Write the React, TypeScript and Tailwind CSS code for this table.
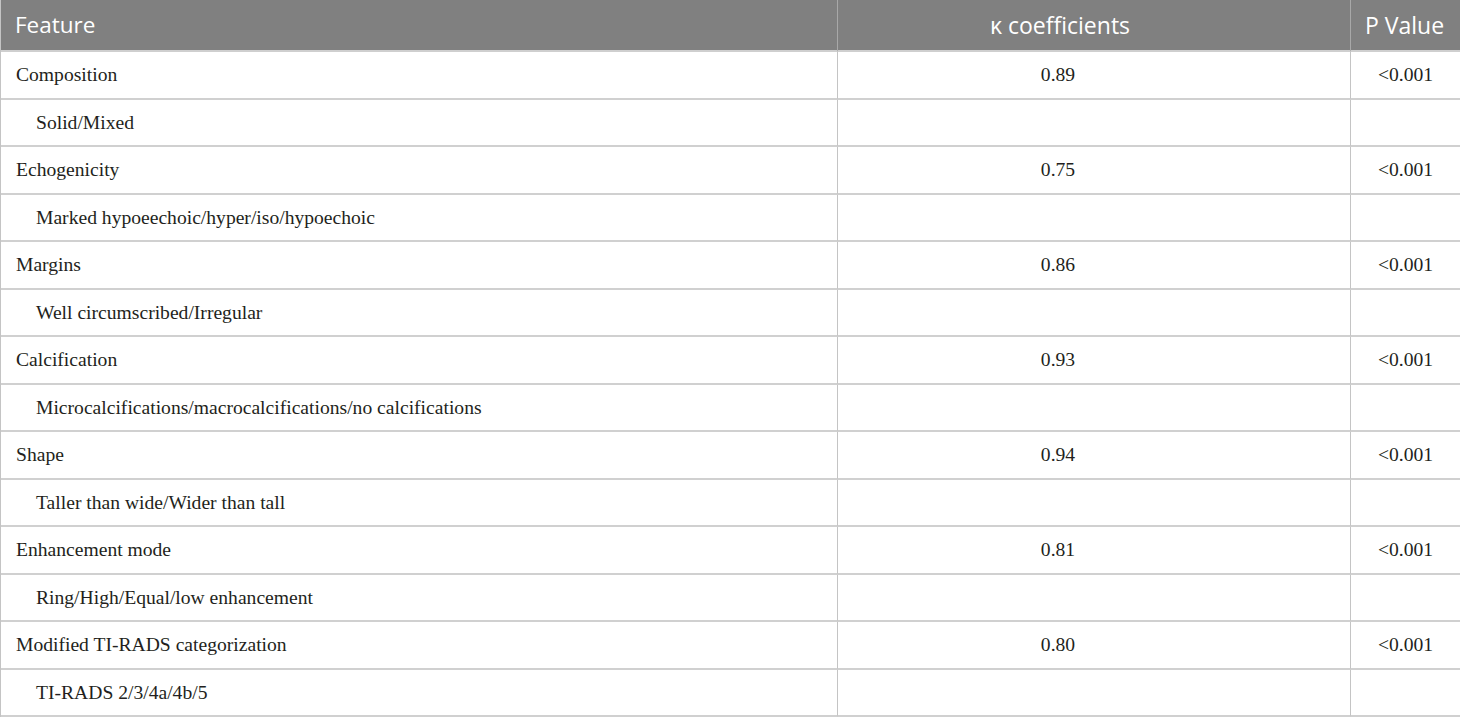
import React from "react";

const rows: { f: string; k?: string; p?: string; sub?: boolean }[] = [
  { f: "Composition", k: "0.89", p: "<0.001" },
  { f: "Solid/Mixed", sub: true },
  { f: "Echogenicity", k: "0.75", p: "<0.001" },
  { f: "Marked hypoeechoic/hyper/iso/hypoechoic", sub: true },
  { f: "Margins", k: "0.86", p: "<0.001" },
  { f: "Well circumscribed/Irregular", sub: true },
  { f: "Calcification", k: "0.93", p: "<0.001" },
  { f: "Microcalcifications/macrocalcifications/no calcifications", sub: true },
  { f: "Shape", k: "0.94", p: "<0.001" },
  { f: "Taller than wide/Wider than tall", sub: true },
  { f: "Enhancement mode", k: "0.81", p: "<0.001" },
  { f: "Ring/High/Equal/low enhancement", sub: true },
  { f: "Modified TI-RADS categorization", k: "0.80", p: "<0.001" },
  { f: "TI-RADS 2/3/4a/4b/5", sub: true },
];

export default function App() {
  return (
    <div className="w-[1460px] h-[717px] overflow-hidden bg-white">
      <div className="grid grid-cols-[837px_513px_110px] border-l border-[#c4c4c4]">
        <div className="h-[52px] bg-[#808080] text-white text-[22.5px] flex items-center pl-[14px] border-r border-b-2 border-[#a8a8a8] border-b-[#cfcfcf] [font-family:'Open_Sans',sans-serif]">
          Feature
        </div>
        <div className="h-[52px] bg-[#808080] text-white text-[23px] flex items-center justify-center pr-[68px] border-r border-b-2 border-[#a8a8a8] border-b-[#cfcfcf] [font-family:'Open_Sans',sans-serif]">
          κ coefficients
        </div>
        <div className="h-[52px] bg-[#808080] text-white text-[23px] flex items-center pl-[14px] border-b-2 border-[#cfcfcf] border-r border-r-[#808080] [font-family:'Open_Sans',sans-serif] whitespace-nowrap">
          P Value
        </div>
        {rows.map((r, i) => (
          <React.Fragment key={i}>
            <div
              className={`h-[47.5px] flex items-center border-r border-b-2 border-r-[#c4c4c4] border-b-[#d0d0d0] text-[19.6px] text-[#231f20] [font-family:'Liberation_Serif',serif] ${r.sub ? "pl-[35px]" : "pl-[15px]"}`}
            >
              {r.f}
            </div>
            <div className="h-[47.5px] flex items-center justify-center pr-[72px] border-r border-b-2 border-r-[#c4c4c4] border-b-[#d0d0d0] text-[19.6px] text-[#231f20] [font-family:'Liberation_Serif',serif]">
              {r.k ?? ""}
            </div>
            <div className="h-[47.5px] flex items-center justify-center border-r border-b-2 border-r-[#a8a8a8] border-b-[#d0d0d0] text-[19.6px] text-[#231f20] [font-family:'Liberation_Serif',serif]">
              {r.p ?? ""}
            </div>
          </React.Fragment>
        ))}
      </div>
    </div>
  );
}
